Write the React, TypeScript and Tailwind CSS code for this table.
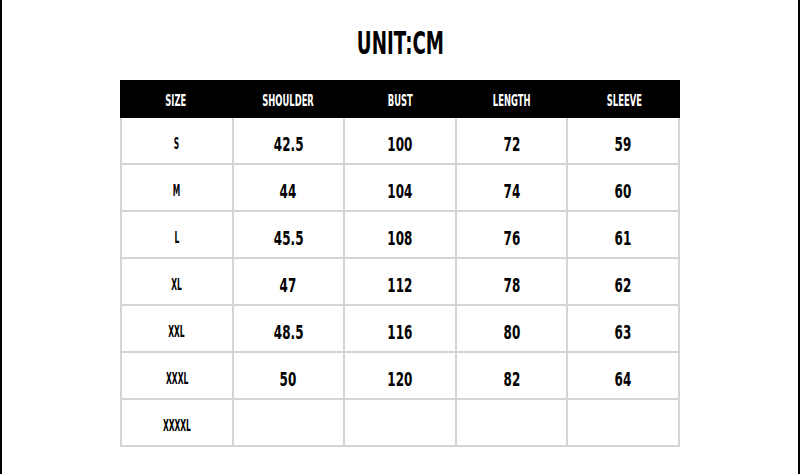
const HEAD = ["SIZE", "SHOULDER", "BUST", "LENGTH", "SLEEVE"];

const ROWS = [
  ["S", "42.5", "100", "72", "59"],
  ["M", "44", "104", "74", "60"],
  ["L", "45.5", "108", "76", "61"],
  ["XL", "47", "112", "78", "62"],
  ["XXL", "48.5", "116", "80", "63"],
  ["XXXL", "50", "120", "82", "64"],
  ["XXXXL", "", "", "", ""],
];

const font = "font-['DejaVu_Sans',sans-serif] font-bold";

export default function App() {
  return (
    <div className={`w-[800px] h-[474px] bg-white border-x-2 border-black flex flex-col items-center ${font}`}>
      <h1 className="mt-[25px] h-[36px] flex items-center text-[32px] leading-none text-black">
        <span className="inline-block scale-x-[0.57]">UNIT:CM</span>
      </h1>

      <div className="mt-[19px] w-[560px]">
        <div className="grid grid-cols-5 h-[38px] bg-black text-white">
          {HEAD.map((h) => (
            <div key={h} className="flex items-center justify-center pt-[4px] text-[15px]">
              <span className="inline-block scale-x-[0.56]">{h}</span>
            </div>
          ))}
        </div>
        <div className="grid grid-cols-5 gap-[2px] bg-[#d4d4d4] px-[2px] pb-[2px]">
          {ROWS.map((r) =>
            r.map((v, i) => (
              <div
                key={r[0] + i}
                className={`h-[45px] bg-white flex items-center justify-center text-black ${
                  i === 0 ? "text-[15px] pt-[7px]" : "text-[20px] pt-[6px]"
                }`}
              >
                <span className={`inline-block ${i === 0 ? "scale-x-[0.5]" : "scale-x-[0.6]"}`}>{v}</span>
              </div>
            ))
          )}
        </div>
      </div>
    </div>
  );
}
